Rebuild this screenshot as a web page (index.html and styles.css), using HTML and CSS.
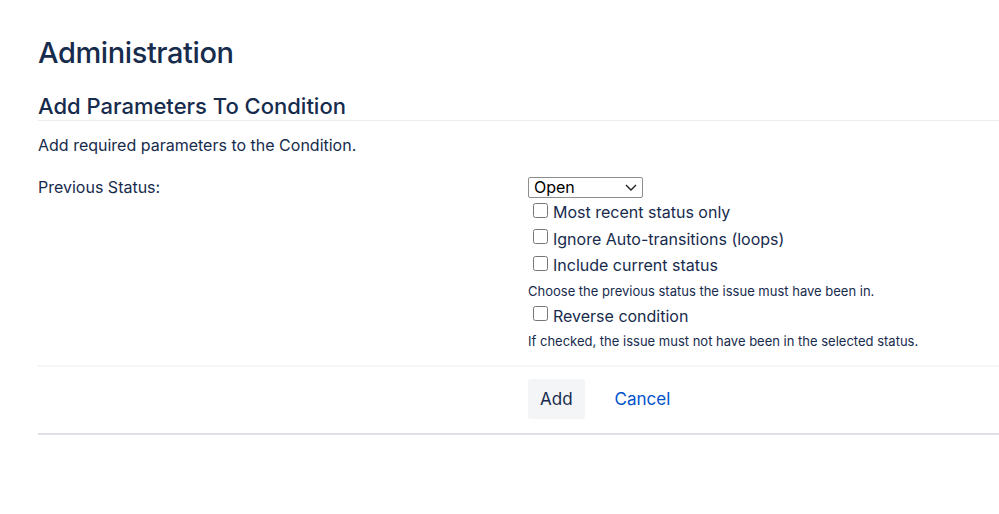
FILE: index.html
```html
<!DOCTYPE html>
<html lang="en">
<head>
    <meta charset="UTF-8">
    <title>Add Parameters To Condition</title>
    <link rel="stylesheet" href="styles.css">
</head>
<body>
    <div class="admin-page">
        <h1 class="page-title">Administration</h1>

        <form class="condition-form" onsubmit="return false">
            <h2 class="form-title">Add Parameters To Condition</h2>
            <p class="form-desc">Add required parameters to the Condition.</p>

            <div class="field-group">
                <label class="field-label" for="previousStatus">Previous Status:</label>
                <div class="field-body">
                    <span class="select-wrap">
                        <select id="previousStatus" class="status-select">
                            <option>Open</option>
                            <option>In Progress</option>
                            <option>Resolved</option>
                            <option>Closed</option>
                        </select>
                        <svg class="select-arrow" width="12" height="7" viewBox="0 0 12 7"><path d="M1 1l5 5 5-5" fill="none" stroke="#222" stroke-width="1.4"/></svg>
                    </span>
                    <label class="check"><input type="checkbox"> Most recent status only</label>
                    <label class="check"><input type="checkbox"> Ignore Auto-transitions (loops)</label>
                    <label class="check"><input type="checkbox"> Include current status</label>
                    <div class="help">Choose the previous status the issue must have been in.</div>
                    <label class="check"><input type="checkbox"> Reverse condition</label>
                    <div class="help">If checked, the issue must not have been in the selected status.</div>
                </div>
            </div>

            <div class="buttons">
                <button class="btn" type="submit">Add</button>
                <a class="cancel" href="#">Cancel</a>
            </div>
        </form>
    </div>
</body>
</html>
```

FILE: styles.css
```css
/* Base */
* {
    margin: 0;
    padding: 0;
    box-sizing: border-box;
}

body {
    font-family: Inter, "Liberation Sans", sans-serif;
    color: #172b4d;
    background: white;
}

.admin-page {
    padding: 36px 0 0 38px;
}

.page-title {
    font-size: 29px;
    font-weight: 500;
    line-height: 34px;
    letter-spacing: -0.4px;
}

.form-title {
    margin-top: 22px;
    font-size: 22px;
    font-weight: 500;
    line-height: 28px;
    border-bottom: 1px solid #ebecf0;
}

.form-desc {
    margin-top: 12px;
    font-size: 16px;
    line-height: 24px;
}

.field-group {
    display: flex;
    margin-top: 20px;
    padding-bottom: 12px;
    border-bottom: 2px solid #f4f5f7;
}

.field-label {
    width: 490px;
    font-size: 16px;
    line-height: 24px;
    margin-top: -2px;
}

.field-body {
    display: flex;
    flex-direction: column;
    align-items: flex-start;
}

/* select with mac style chevron */
.select-wrap {
    position: relative;
    display: block;
    margin-bottom: 1px;
}

.status-select {
    display: block;
    width: 115px;
    height: 21px;
    appearance: none;
    font-family: Inter, "Liberation Sans", sans-serif;
    font-size: 16px;
    line-height: 19px;
    color: black;
    border: 1px solid #8d8d8d;
    border-radius: 2px;
    background: white;
    padding-left: 5px;
}

.select-arrow {
    position: absolute;
    right: 6px;
    top: 7px;
    pointer-events: none;
}

.check {
    display: flex;
    align-items: center;
    gap: 5px;
    margin-left: 5px;
    font-size: 16px;
    line-height: 26.5px;
}

.check input {
    width: 15px;
    height: 15px;
    margin: 0;
    position: relative;
    top: -2px;
}

.help {
    font-size: 13px;
    line-height: 24px;
}

.buttons {
    display: flex;
    align-items: center;
    gap: 30px;
    padding: 12px 0 14px 490px;
    border-bottom: 2px solid #dfe1e6;
}

.btn {
    height: 40px;
    padding: 0 12px;
    border: none;
    border-radius: 3px;
    background: #f4f5f7;
    color: #172b4d;
    font-family: Inter, "Liberation Sans", sans-serif;
    font-size: 17px;
    cursor: pointer;
}

.cancel {
    color: #0052cc;
    font-size: 17px;
    text-decoration: none;
}
```
